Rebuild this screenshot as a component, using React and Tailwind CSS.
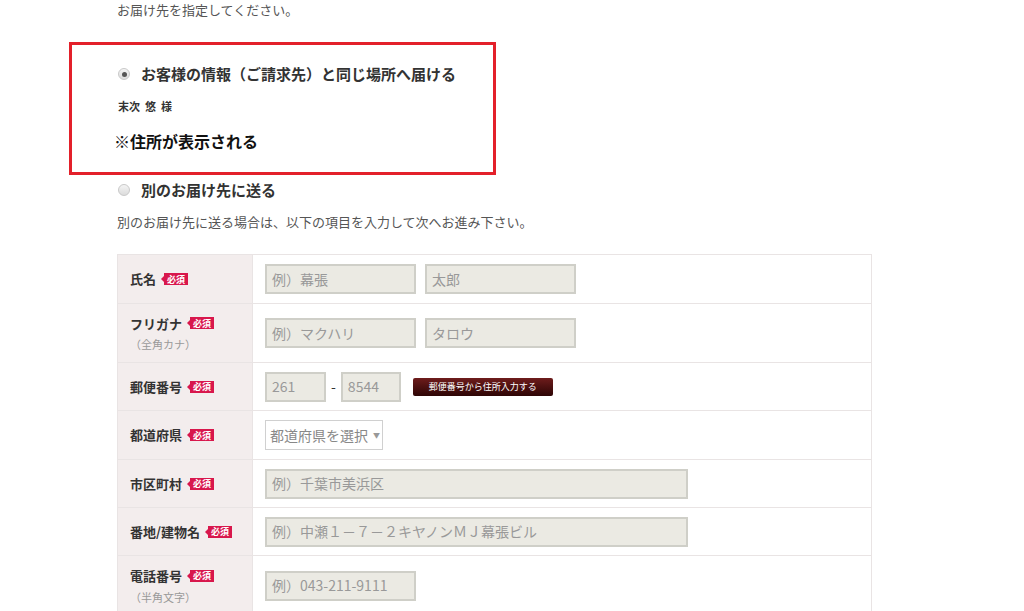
import React from "react";

const FONT = { fontFamily: '"Noto Sans CJK JP", "Noto Sans", sans-serif' };

const Badge = () => (
  <span className="ml-[5px] inline-flex items-center">
    <span className="h-0 w-0 border-y-[3px] border-r-[3px] border-y-transparent border-r-[#d8174c]" />
    <span className="flex h-[12px] w-[24px] items-center justify-center bg-[#d8174c] text-[9px] font-bold leading-none text-white">
      必須
    </span>
  </span>
);

const Radio = ({ checked }) => (
  <span className="flex h-[12px] w-[12px] items-center justify-center rounded-full border border-[#c9c9c9] bg-gradient-to-b from-[#f4f4f4] to-[#dcdcdc]">
    {checked && <span className="h-[5px] w-[5px] rounded-full bg-[#555]" />}
  </span>
);

const Field = ({ placeholder, w }) => (
  <div
    className={`flex h-[30px] ${w} items-center border-2 border-[#cfcfc8] bg-[#ebeae3] px-[5px] text-[14px] text-[#999]`}
  >
    {placeholder}
  </div>
);

const Row = ({ label, sub, h, children, last }) => (
  <div className={`flex ${h} ${last ? "" : "border-b border-[#e9e4e4]"}`}>
    <div className="flex w-[135px] shrink-0 flex-col justify-center border-r border-[#e9e4e4] bg-[#f3eded] pl-[12px]">
      <div className="flex items-center text-[13px] font-bold text-[#333]">
        {label}
        <Badge />
      </div>
      {sub && <div className="mt-[3px] text-[11px] text-[#999]">{sub}</div>}
    </div>
    <div className="flex flex-1 items-center gap-[9px] pl-[12px]">{children}</div>
  </div>
);

export default function App() {
  return (
    <div className="min-h-[611px] w-full overflow-hidden bg-white" style={FONT}>
      <p className="pl-[117px] text-[13px] leading-[20px] text-[#555]">お届け先を指定してください。</p>

      <div className="ml-[69px] mt-[22px] w-[427px] border-[3px] border-[#e3202a] pb-[20px] pl-[46px] pt-[18px]">
        <div className="flex h-[22px] items-center gap-[11px]">
          <Radio checked />
          <span className="text-[15px] font-bold text-[#333]">お客様の情報（ご請求先）と同じ場所へ届ける</span>
        </div>
        <div className="mt-[13px] h-[16px] text-[11px] font-bold leading-[16px] text-[#333]">
          末次&nbsp;&nbsp;悠&nbsp;&nbsp;様
        </div>
        <div className="-ml-[4px] mt-[16px] h-[22px] text-[16px] font-bold leading-[22px] text-[#111]">
          ※住所が表示される
        </div>
      </div>

      <div className="ml-[118px] mt-[4px] flex h-[22px] items-center gap-[11px]">
        <Radio />
        <span className="text-[15px] font-bold text-[#333]">別のお届け先に送る</span>
      </div>
      <p className="mt-[11px] pl-[117px] text-[13px] leading-[20px] text-[#555]">
        別のお届け先に送る場合は、以下の項目を入力して次へお進み下さい。
      </p>

      <div className="ml-[117px] mt-[22px] w-[755px] border-x border-t border-[#e9e4e4]">
        <Row label="氏名" h="h-[49px]">
          <Field placeholder="例）幕張" w="w-[151px]" />
          <Field placeholder="太郎" w="w-[151px]" />
        </Row>
        <Row label="フリガナ" sub="（全角カナ）" h="h-[59px]">
          <Field placeholder="例）マクハリ" w="w-[151px]" />
          <Field placeholder="タロウ" w="w-[151px]" />
        </Row>
        <Row label="郵便番号" h="h-[48px]">
          <div className="flex items-center">
            <Field placeholder="261" w="w-[61px]" />
            <span className="mx-[5px] text-[14px] text-[#333]">-</span>
            <Field placeholder="8544" w="w-[60px]" />
            <button className="ml-[12px] flex h-[18px] w-[140px] items-center justify-center rounded-[2px] bg-gradient-to-b from-[#6e1c1c] to-[#2e0606] text-[9px] text-white">
              郵便番号から住所入力する
            </button>
          </div>
        </Row>
        <Row label="都道府県" h="h-[49px]">
          <div className="flex h-[30px] w-[118px] items-center whitespace-nowrap border border-[#d0d0d0] bg-white pl-[4px] text-[14px] text-[#888]">
            都道府県を選択<span className="ml-[5px] text-[7px] text-[#999]">▼</span>
          </div>
        </Row>
        <Row label="市区町村" h="h-[48px]">
          <Field placeholder="例）千葉市美浜区" w="w-[423px]" />
        </Row>
        <Row label="番地/建物名" h="h-[48px]">
          <Field placeholder="例）中瀬１－７－２キヤノンＭＪ幕張ビル" w="w-[423px]" />
        </Row>
        <Row label="電話番号" sub="（半角文字）" h="h-[59px]" last>
          <Field placeholder="例）043-211-9111" w="w-[151px]" />
        </Row>
      </div>
    </div>
  );
}
